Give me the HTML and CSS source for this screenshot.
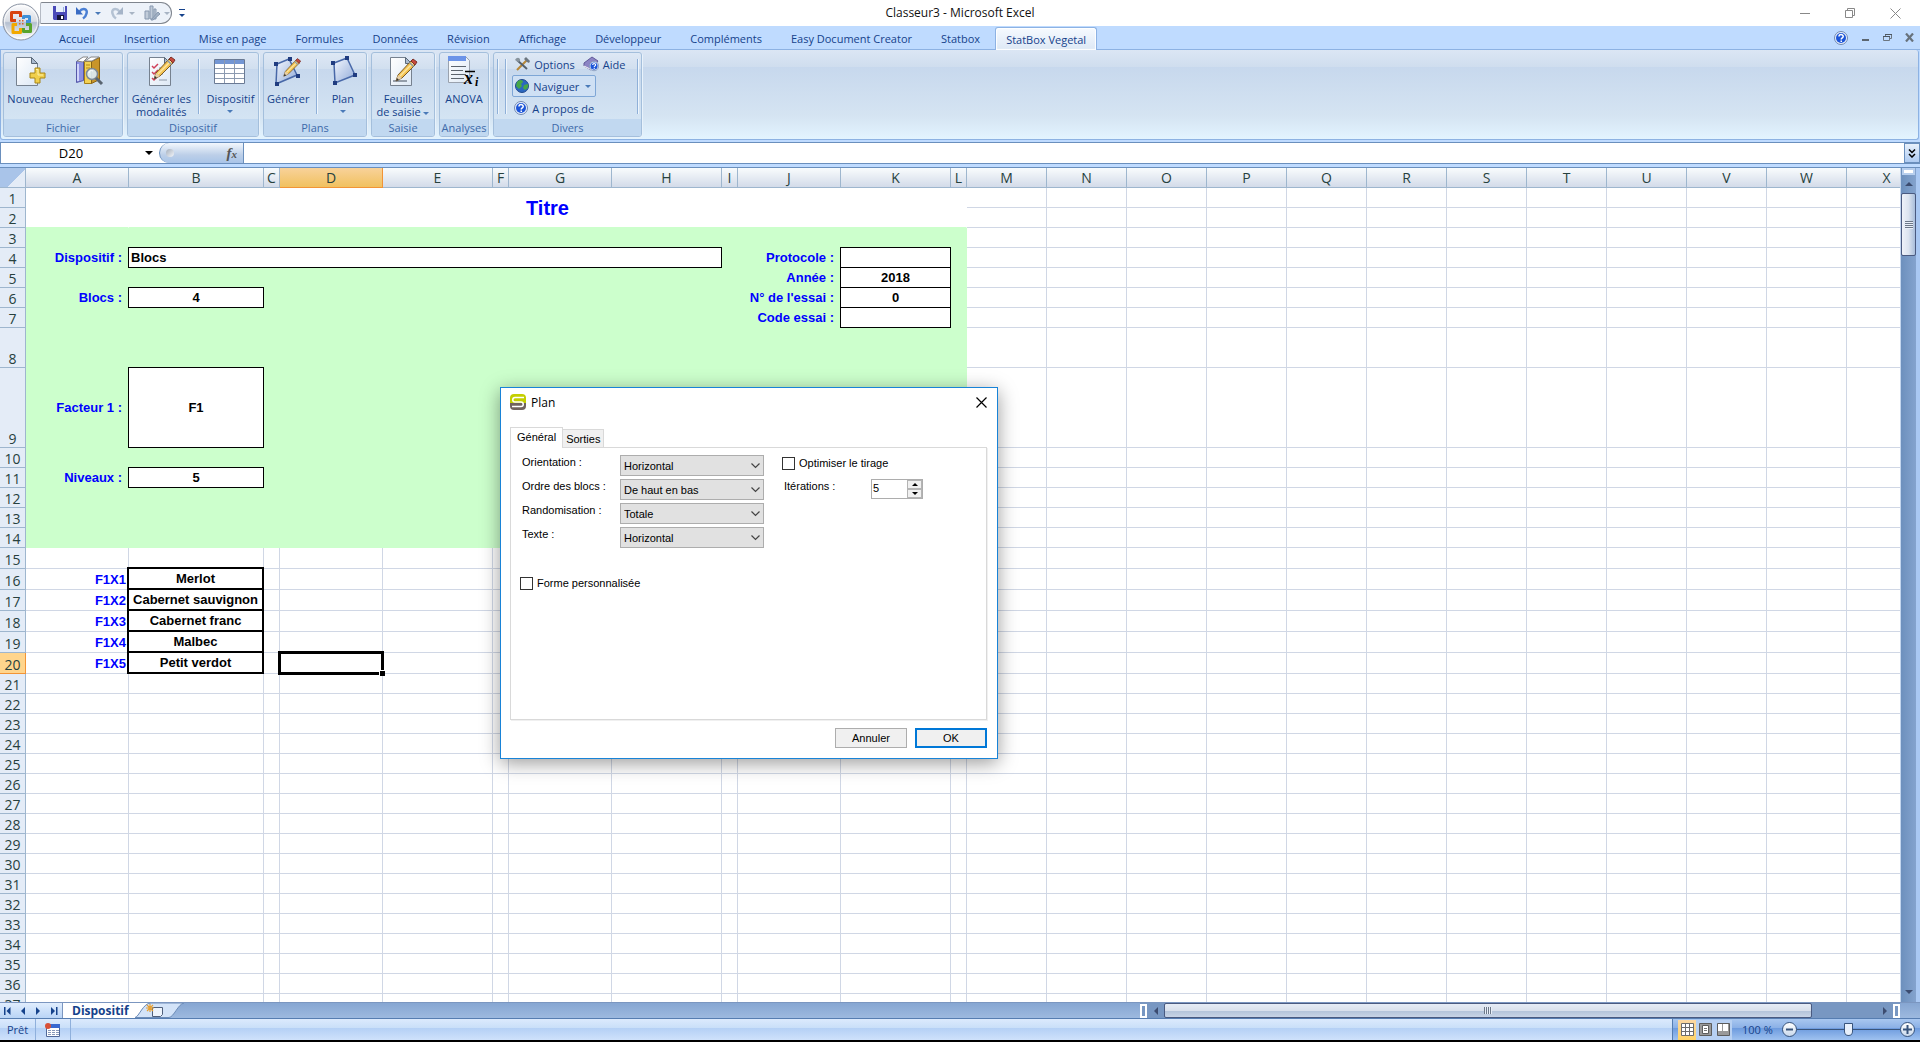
FILE: index.html
```html
<!DOCTYPE html>
<html lang="fr">
<head>
    <meta charset="UTF-8">
    <meta name="viewport" content="width=device-width, initial-scale=1.0">
    <title>Classeur3 - Microsoft Excel</title>
    <link rel="stylesheet" href="styles.css">
</head>
<body>

    <!-- Title bar -->
    <header class="titlebar">
        <button class="office-button" aria-label="Bouton Office">
            <svg width="38" height="38" viewBox="0 0 38 38">
                <defs>
                    <linearGradient id="orb" x1="0" y1="0" x2="0" y2="1">
                        <stop offset="0" stop-color="#fdfdfe"/><stop offset=".48" stop-color="#d9dde4"/>
                        <stop offset=".52" stop-color="#b4bfd0"/><stop offset="1" stop-color="#ffffff"/>
                    </linearGradient>
                </defs>
                <circle cx="19" cy="19" r="18" fill="url(#orb)" stroke="#8a93a3"/>
                <circle cx="19" cy="19" r="16.500" fill="none" stroke="#fff" stroke-opacity=".7"/>
                <g fill="none" stroke-width="3" stroke-linejoin="round">
                    <path d="M14 17.500H9.500V9.500H18.500V14" stroke="#d8430e"/>
                    <path d="M21.500 16V13.500H27.500V18.500H24" stroke="#3d8fd8"/>
                    <path d="M15 21.500H11V29.500H18.500V25" stroke="#f2a900"/>
                    <path d="M24 21.500H28.500V28.500H21.500V25" stroke="#58a42c"/>
                </g>
                <path d="M17 17h1.500v1.500H17zM20 17h1.500v1.500H20zM17 20h1.500v1.500H17zM20 20h1.500v1.500H20z" fill="#d8602a"/>
            </svg>
        </button>
        <div class="quick-access">
            <button aria-label="Enregistrer">
                <svg width="14" height="14" viewBox="0 0 14 14"><path d="M0 0h14v14H1L0 13z" fill="#4a4ab8"/><path d="M3 0h9v6H3z" fill="#e8f0fc"/><path d="M10 1h1v5h-1z" fill="#9db4e0"/><path d="M4 9h7v5H4z" fill="#16163c"/><path d="M8 10h2v3H8z" fill="#fff"/></svg>
            </button>
            <button aria-label="Annuler la frappe">
                <svg width="13" height="14" viewBox="0 0 13 14"><path d="M3 6C7 1 12 3 10.500 7.500C10 10 8.500 11.500 7 12.500" fill="none" stroke="#4a7fd4" stroke-width="2.500"/><path d="M0 1v7.500h7z" fill="#3a6cc4"/></svg>
                <i class="caret"></i>
            </button>
            <button aria-label="Rétablir">
                <svg width="13" height="14" viewBox="0 0 13 14"><path d="M10 6C6 1 1 3 2.500 7.500C3 10 4.500 11.500 6 12.500" fill="none" stroke="#b4c2d3" stroke-width="2.500"/><path d="M13 1v7.500H6z" fill="#a5b4c8"/></svg>
                <i class="caret caret-off"></i>
            </button>
            <button aria-label="Graphique">
                <svg width="17" height="16" viewBox="0 0 17 16"><path d="M1 6h4v8H1zM6 1h3v13H6zM10 4h2v10h-2z" fill="#c0cbd9" stroke="#8798af"/><path d="M7 15l7-8 2 2-7 6z" fill="#a3b2c5" stroke="#8798af"/></svg>
                <i class="caret caret-off"></i>
            </button>
        </div>
        <button class="customize" aria-label="Personnaliser"><i class="caret"></i></button>
        <h1 class="title">Classeur3 - Microsoft Excel</h1>
        <div class="window-buttons">
            <button aria-label="Réduire"><svg width="11" height="11" viewBox="0 0 11 11"><path d="M0 5.500h10"/></svg></button>
            <button aria-label="Restaurer"><svg width="11" height="11" viewBox="0 0 11 11"><path d="M.5 2.500h7v7h-7zM2.500 2.500v-2h7v7h-2"/></svg></button>
            <button aria-label="Fermer"><svg width="11" height="11" viewBox="0 0 11 11"><path d="M.5.500l10 10M10.500.500l-10 10"/></svg></button>
        </div>
    </header>

    <!-- Ribbon tabs -->
    <nav class="tabs">
        <a href="#">Accueil</a>
        <a href="#">Insertion</a>
        <a href="#">Mise en page</a>
        <a href="#">Formules</a>
        <a href="#">Données</a>
        <a href="#">Révision</a>
        <a href="#">Affichage</a>
        <a href="#">Développeur</a>
        <a href="#">Compléments</a>
        <a href="#">Easy Document Creator</a>
        <a href="#">Statbox</a>
        <a href="#" class="active">StatBox Vegetal</a>
        <div class="tabs-right">
            <button aria-label="Aide"><svg width="14" height="14" viewBox="0 0 14 14"><use href="#help"/></svg></button>
            <button aria-label="Réduire le classeur"><svg width="9" height="9" viewBox="0 0 9 9"><path d="M1 6h7v2H1z" fill="#5c6670"/></svg></button>
            <button aria-label="Restaurer le classeur"><svg width="9" height="9" viewBox="0 0 9 9"><path d="M.5 3.500h6v4h-6zM2.500 3V1.500h6v4H7" fill="none" stroke="#6c7680"/><path d="M2 1h7v1H2zM0 3h7v1H0z" fill="#4c5660"/></svg></button>
            <button aria-label="Fermer le classeur"><svg width="9" height="9" viewBox="0 0 9 9"><path d="M1 .5l7 8M8 .5l-7 8" stroke="#68727c" stroke-width="2.200"/></svg></button>
        </div>
    </nav>

    <!-- Shared shapes -->
    <svg class="shapes" width="0" height="0">
        <defs>
            <linearGradient id="sheetfill" x1="0" y1="0" x2="1" y2="1"><stop offset="0" stop-color="#fff"/><stop offset="1" stop-color="#dde8f5"/></linearGradient>
            <linearGradient id="poly" x1="0" y1="0" x2="1" y2="1"><stop offset="0" stop-color="#f4f8fe"/><stop offset="1" stop-color="#8fa9d8"/></linearGradient>
            <g id="help">
                <circle cx="7" cy="7" r="6.500" fill="#e8f0fc" stroke="#7188b0"/>
                <circle cx="7" cy="7" r="5" fill="#1c55d8"/>
                <path d="M5 5.500C5 3 9.200 3 9.200 5.400C9.200 6.800 7.200 6.800 7.200 8.500" fill="none" stroke="#fff" stroke-width="1.500"/>
                <path d="M6.500 9.500h1.500v1.500H6.500z" fill="#fff"/>
            </g>
            <g id="page">
                <path d="M.5.500h15l6 6v22H.5z" fill="url(#sheetfill)" stroke="#76818f"/>
                <path d="M15.500.500l6 6h-6z" fill="#a9bad0" stroke="#5a6878"/>
            </g>
            <g id="pencil">
                <path d="M0 22l2-6L15 2l4 4L6 19z" fill="#f4c452" stroke="#7a5a28"/>
                <path d="M4 17L17 4" stroke="#fbe6a4" stroke-width="1.500"/>
                <path d="M15 2l2-2 4 3-2 3z" fill="#c84a3c" stroke="#7c3028"/>
                <path d="M13.500 3.500l4 4" stroke="#8898a8" stroke-width="1.500"/>
                <path d="M0 22l2-6 4 3z" fill="#e8d0a8"/><path d="M0 22l1-3 2 2z" fill="#333"/>
            </g>
        </defs>
    </svg>

    <!-- Ribbon -->
    <section class="ribbon">
        <div class="group group-fichier">
            <div class="group-body">
                <button class="big">
                    <svg width="32" height="32" viewBox="0 0 32 32"><use href="#page" x="2" y="1"/><path d="M21 12h5v5h5v5h-5v5h-5v-5h-5v-5h5z" fill="#f0cf4c" stroke="#a88618"/><path d="M22 13.500h2V19h5" fill="none" stroke="#fdf0a8"/></svg>
                    <span>Nouveau</span>
                </button>
                <button class="big">
                    <svg width="32" height="32" viewBox="0 0 32 32">
                        <path d="M3.500 5.500l7-4v23l-7 2z" fill="#8c90e0" stroke="#5558a8"/><path d="M5 8v17" stroke="#d0d4fa" stroke-width="2"/>
                        <path d="M4 5l6-4h5l-5 5z" fill="#fff" stroke="#888"/>
                        <path d="M11.500 5.500h7v22h-7z" fill="#f3d154" stroke="#a47e18"/><path d="M18.500 5.500l8-4v22l-8 4z" fill="#c8952a" stroke="#8a6414"/>
                        <path d="M12 5l6-4h8l-7 4z" fill="#fff" stroke="#888"/><path d="M13 9h4M13 12h4" stroke="#b48818"/>
                        <circle cx="19" cy="18" r="5.500" fill="#dcecf8" fill-opacity=".9" stroke="#7c8894" stroke-width="1.500"/>
                        <path d="M23 22l6 6" stroke="#596470" stroke-width="3"/><path d="M16 17c0-2 2-3 4-2" fill="none" stroke="#fff"/>
                    </svg>
                    <span>Rechercher</span>
                </button>
            </div>
            <div class="group-label">Fichier</div>
        </div>
        <div class="group group-dispositif">
            <div class="group-body">
                <button class="big">
                    <svg width="32" height="32" viewBox="0 0 32 32"><use href="#page" x="4" y="1"/><path d="M7 10l2 2 4-4M7 16l2 2 4-4M7 22l2 2 4-4" fill="none" stroke="#d04058" stroke-width="1.500"/><path d="M14 12h7M14 18h4M14 24h8" stroke="#8c98a8"/><use href="#pencil" x="9" y="1"/></svg>
                    <span>Générer les<br>modalités</span>
                </button>
                <i class="sep"></i>
                <button class="big">
                    <svg width="32" height="32" viewBox="0 0 32 32"><path d="M.5 3.500h30v24H.5z" fill="#fff" stroke="#6a7a94"/><path d="M1 4h29v4H1z" fill="#7396d4"/><path d="M1 12.500h29M1 17.500h29M1 22.500h29M10.500 4v23M20.500 4v23" stroke="#8c9ab0"/></svg>
                    <span>Dispositif</span>
                    <i class="caret"></i>
                </button>
            </div>
            <div class="group-label">Dispositif</div>
        </div>
        <div class="group group-plans">
            <div class="group-body">
                <button class="big">
                    <svg width="32" height="32" viewBox="0 0 32 32"><path d="M5 8l12-5 8 16-21 9z" fill="url(#poly)" stroke="#4868a8" stroke-width="1.500"/><path d="M2 6h4v4H2zM16 1h4v4h-4zM24 18h4v4h-4zM3 26h4v4H3z" fill="#203c80"/><use href="#pencil" x="11" y="2" transform="translate(3 1) scale(.8)"/></svg>
                    <span>Générer</span>
                </button>
                <i class="sep"></i>
                <button class="big">
                    <svg width="32" height="32" viewBox="0 0 32 32"><path d="M7 7l13-5 8 17-20 8z" fill="url(#poly)" stroke="#4868a8" stroke-width="1.500"/><path d="M4 5h4v4H4zM18 0h4v4h-4zM26 17h4v4h-4zM6 25h4v4H6z" fill="#203c80"/></svg>
                    <span>Plan</span>
                    <i class="caret"></i>
                </button>
            </div>
            <div class="group-label">Plans</div>
        </div>
        <div class="group group-saisie">
            <div class="group-body">
                <button class="big">
                    <svg width="32" height="32" viewBox="0 0 32 32"><use href="#page" x="3" y="1"/><path d="M6 25h14" stroke="#404c5c"/><use href="#pencil" x="9" y="3"/></svg>
                    <span>Feuilles<br>de saisie <i class="caret"></i></span>
                </button>
            </div>
            <div class="group-label">Saisie</div>
        </div>
        <div class="group group-analyses">
            <div class="group-body">
                <button class="big">
                    <svg width="32" height="32" viewBox="0 0 32 32"><path d="M.5.500h17l4 4v22H.5z" fill="url(#sheetfill)" stroke="#9aa2ae"/><path d="M0 0h18v5H0z" fill="#6c94e8"/><path d="M3 10.500h15M3 14.500h12M3 18.500h15M3 22.500h13" stroke="#5c646e"/><path d="M17 15.500h10" stroke="#000" stroke-width="1.500"/><text x="16" y="28" class="xbar">x</text><text x="27" y="30" class="xbar-sub">i</text></svg>
                    <span>ANOVA</span>
                </button>
            </div>
            <div class="group-label">Analyses</div>
        </div>
        <div class="group group-divers">
            <div class="group-body">
                <i class="sep"></i>
                <i class="sep"></i>
                <div class="small-list">
                    <div class="small-row">
                        <button class="small"><svg width="16" height="16" viewBox="0 0 16 16"><path d="M3 14L13 4" stroke="#b88838" stroke-width="2.200"/><path d="M10 3l2-2 4 4-1 2-2-1-2-2z" fill="#6c7680"/><path d="M3 4l10 9" stroke="#54606c" stroke-width="2"/><path d="M1 4c2-4 6-2 5 1L4 6z" fill="#88949e"/></svg>Options</button>
                        <button class="small"><svg width="16" height="16" viewBox="0 0 16 16"><path d="M1 7l8-6 6 4-7 9-7-4z" fill="#8c84c4" stroke="#605898"/><path d="M1 10l7 3.500" stroke="#fff"/><g transform="translate(6 5) scale(.72)"><use href="#help"/></g></svg>Aide</button>
                    </div>
                    <button class="small framed"><svg width="14" height="14" viewBox="0 0 14 14"><circle cx="7" cy="7" r="6.500" fill="#2c68c0" stroke="#20488c"/><path d="M2 3c3-3 6-2 6 0L6 5l1 2-3 3-3-3zM9 6l4-1c1 3-1 5-3 6L8 9z" fill="#48a848"/></svg>Naviguer<i class="caret"></i></button>
                    <button class="small"><svg width="14" height="14" viewBox="0 0 14 14"><use href="#help"/></svg>A propos de</button>
                </div>
                <i class="sep"></i>
            </div>
            <div class="group-label">Divers</div>
        </div>
    </section>

    <!-- Formula bar -->
    <div class="formula-bar">
        <input class="name-box" type="text" value="D20" aria-label="Zone Nom">
        <i class="name-caret"></i>
        <div class="fx"><i class="fx-dot"></i><button aria-label="Insérer une fonction">f<sub>x</sub></button></div>
        <input class="formula" type="text" aria-label="Barre de formule">
        <button class="expand" aria-label="Développer la barre de formule">
            <svg width="8" height="9" viewBox="0 0 8 9"><path d="M1 .5l3 3 3-3M1 5l3 3 3-3" fill="none" stroke="#000" stroke-width="1.500"/></svg>
        </button>
    </div>

    <!-- Worksheet -->
    <main class="workspace">
        <div class="sheet-area">
            <table class="sheet" id="sheet"></table>
        </div>
        <div class="vscroll">
            <i class="vsplit"></i>
            <button class="vup" aria-label="Défiler vers le haut"></button>
            <i class="vthumb"></i>
            <button class="vdown" aria-label="Défiler vers le bas"></button>
        </div>

        <!-- Plan dialog -->
        <form class="dialog" role="dialog" aria-labelledby="dialog-title">
            <div class="dialog-title">
                <svg width="16" height="16" viewBox="0 0 16 16"><path d="M0 9V4a4 4 0 0 1 4-4h8a4 4 0 0 1 4 4v5z" fill="#c4cf00"/><path d="M0 9h16v3a4 4 0 0 1-4 4H4a4 4 0 0 1-4-4z" fill="#70625e"/><path d="M14 3.500H5C2 3.500 2 8 5 8h6c3 0 3 4.500 0 4.500H2" fill="none" stroke="#fff" stroke-width="1.500"/></svg>
                <h2 id="dialog-title">Plan</h2>
                <button type="button" class="dialog-close" aria-label="Fermer"><svg width="11" height="11" viewBox="0 0 11 11"><path d="M.5.500l10 10M10.500.500l-10 10" stroke="#000" stroke-width="1.200"/></svg></button>
            </div>
            <div class="dialog-tabs">
                <button type="button" class="selected">Général</button>
                <button type="button">Sorties</button>
            </div>
            <div class="panel">
                <div class="fields">
                    <label for="orientation">Orientation :</label>
                    <div class="combo"><select id="orientation"><option>Horizontal</option><option>Vertical</option></select><svg width="9" height="6" viewBox="0 0 9 6"><path d="M.5.500l4 4 4-4"/></svg></div>
                    <label for="ordre">Ordre des blocs :</label>
                    <div class="combo"><select id="ordre"><option>De haut en bas</option></select><svg width="9" height="6" viewBox="0 0 9 6"><path d="M.5.500l4 4 4-4"/></svg></div>
                    <label for="random">Randomisation :</label>
                    <div class="combo"><select id="random"><option>Totale</option></select><svg width="9" height="6" viewBox="0 0 9 6"><path d="M.5.500l4 4 4-4"/></svg></div>
                    <label for="texte">Texte :</label>
                    <div class="combo"><select id="texte"><option>Horizontal</option><option>Vertical</option></select><svg width="9" height="6" viewBox="0 0 9 6"><path d="M.5.500l4 4 4-4"/></svg></div>
                </div>
                <div class="options">
                    <label class="check"><input type="checkbox">Optimiser le tirage</label>
                    <div class="iterations">
                        <label for="iterations">Itérations :</label>
                        <div class="spinner">
                            <input id="iterations" type="number" value="5">
                            <div class="spin-buttons">
                                <button type="button" aria-label="Plus"><i class="up"></i></button>
                                <button type="button" aria-label="Moins"><i class="down"></i></button>
                            </div>
                        </div>
                    </div>
                </div>
                <label class="check check-form"><input type="checkbox">Forme personnalisée</label>
            </div>
            <div class="dialog-actions">
                <button type="button">Annuler</button>
                <button type="button" class="default">OK</button>
            </div>
        </form>
    </main>

    <!-- Sheet tabs and horizontal scroll -->
    <div class="sheet-tabs">
        <div class="tab-nav">
            <button aria-label="Première feuille"><svg width="7" height="8" viewBox="0 0 7 8"><path d="M0 0h1.500v8H0zM6.500 0v8l-4-4z"/></svg></button>
            <button aria-label="Feuille précédente"><svg width="7" height="8" viewBox="0 0 7 8"><path d="M5 0v8L1 4z"/></svg></button>
            <button aria-label="Feuille suivante"><svg width="7" height="8" viewBox="0 0 7 8"><path d="M1 0v8l4-4z"/></svg></button>
            <button aria-label="Dernière feuille"><svg width="7" height="8" viewBox="0 0 7 8"><path d="M5 0h1.500v8H5zM0 0v8l4-4z"/></svg></button>
        </div>
        <a href="#" class="sheet-tab">Dispositif</a>
        <button class="new-sheet" aria-label="Insérer une feuille">
            <svg width="50" height="15" viewBox="0 0 50 15"><path d="M0 0h16C8 0 4 14 0 14.500z" fill="#fff"/><path d="M0 14.500C4 14 8 0 16 0h33c-6 1-10 14-15 14.500z" fill="#d3e3f8" stroke="#6c8cb8"/><path d="M17.500 4.500h10v7l-2 2h-8z" fill="#eef4fc" stroke="#50607c"/><path d="M15 1v8M11 5h8M12 2l6 6M18 2l-6 6" stroke="#e8a030" stroke-width="1.200"/></svg>
        </button>
        <div class="hscroll">
            <i class="hsplit"></i>
            <button aria-label="Défiler vers la gauche"><i class="arrow-left"></i></button>
            <div class="htrack"><i class="hthumb"></i></div>
            <button aria-label="Défiler vers la droite"><i class="arrow-right"></i></button>
            <i class="hsplit"></i>
        </div>
    </div>

    <!-- Status bar -->
    <footer class="status">
        <span class="ready">Prêt</span>
        <button class="macro" aria-label="Enregistrer une macro">
            <svg width="16" height="14" viewBox="0 0 16 14"><path d="M1.500 2.500h13v11h-13z" fill="#fff" stroke="#506898"/><path d="M2 1h13v4H2z" fill="#3868d0"/><path d="M3 7.500h11M3 9.500h11M3 11.500h11" stroke="#8898b8" stroke-dasharray="3 1"/><circle cx="3" cy="3" r="3" fill="#d85038"/></svg>
        </button>
        <div class="zoom">
            <div class="views">
                <button class="on" aria-label="Normal"><svg width="13" height="13" viewBox="0 0 13 13"><path d="M.5.500h12v12H.5zM4.500 0v13M8.500 0v13M0 4.500h13M0 8.500h13" fill="#fff" stroke="#6c6c6c"/></svg></button>
                <button aria-label="Mise en page"><svg width="13" height="13" viewBox="0 0 13 13"><path d="M.5.500h12v12H.5z" fill="#999" stroke="#5c5c5c"/><path d="M3.500 2.500h6v8h-6z" fill="#fff" stroke="#5c5c5c"/><path d="M5 5.500h3M5 7.500h3" stroke="#777"/></svg></button>
                <button aria-label="Sauts de page"><svg width="13" height="13" viewBox="0 0 13 13"><path d="M.5.500h12v12H.5z" fill="#999" stroke="#5c5c5c"/><path d="M1 1h4v7H1zM6 1h5v7H6z" fill="#fff"/></svg></button>
            </div>
            <span>100 %</span>
            <button class="round" aria-label="Zoom arrière"><svg width="9" height="9" viewBox="0 0 9 9"><path d="M1 4.500h7"/></svg></button>
            <div class="zoom-track"><input type="range" min="0" max="100" value="50" aria-label="Zoom"></div>
            <button class="round" aria-label="Zoom avant"><svg width="9" height="9" viewBox="0 0 9 9"><path d="M0 4.500h9M4.500 0v9"/></svg></button>
        </div>
    </footer>

    <script src="sheet.js"></script>
</body>
</html>
```

FILE: styles.css
```css
/* General Reset */
* {
    margin: 0;
    padding: 0;
    box-sizing: border-box;
}

body {
    font-family: "Open Sans", "Noto Sans", sans-serif;
    font-size: 11px;
    display: flex;
    flex-direction: column;
    height: 100vh;
    overflow: hidden;
    background-color: #bfdbff;
    color: #15428b;
}

button {
    font: inherit;
    color: inherit;
    background: none;
    border: none;
}

a {
    color: inherit;
    text-decoration: none;
}

svg {
    display: block;
    flex: none;
}

.shapes {
    position: absolute;
}

.caret {
    display: inline-block;
    border: 3px solid transparent;
    border-top-color: #4a7ab8;
    border-bottom: none;
}

.caret-off {
    border-top-color: #a8b4c4;
}

/* Title bar */
.titlebar {
    position: relative;
    display: flex;
    align-items: center;
    height: 26px;
    padding-left: 40px;
    background-color: #fff;
    flex: none;
}

.office-button {
    position: absolute;
    left: 2px;
    top: 3px;
    z-index: 2;
}

.quick-access {
    display: flex;
    align-items: center;
    gap: 9px;
    width: 132px;
    height: 22px;
    padding-left: 12px;
    background-color: #edf2f9;
    border: 1px solid #7f858e;
    border-left-color: #b4bac4;
    border-radius: 2px 11px 11px 0;
}

.quick-access button {
    display: flex;
    align-items: center;
    gap: 6px;
}

.quick-access button:last-child {
    gap: 3px;
}

.customize {
    display: flex;
    margin-left: 7px;
    padding-top: 4px;
    border-top: 1px solid #15428b;
}

.customize .caret {
    border-top-color: #15428b;
}

.title {
    position: absolute;
    left: 0;
    right: 0;
    line-height: 26px;
    font-size: 12px;
    font-weight: normal;
    text-align: center;
    color: #111;
    pointer-events: none;
}

.window-buttons {
    display: flex;
    gap: 34px;
    margin-left: auto;
    padding-right: 19px;
}

.window-buttons path {
    fill: none;
    stroke: #888;
}

/* Ribbon tabs */
.tabs {
    display: flex;
    gap: 1px;
    height: 24px;
    padding-left: 45px;
    border-bottom: 1px solid #8db2e3;
    flex: none;
}

.tabs a {
    padding: 0 14px;
    line-height: 26px;
    white-space: nowrap;
}

.tabs .active {
    height: 23px;
    margin-top: 1px;
    padding: 0 10px;
    line-height: 24px;
    margin-bottom: -1px;
    background-image: linear-gradient(#f6faff, #dde8f5);
    border: 1px solid #8db2e3;
    border-bottom: none;
    border-radius: 3px 3px 0 0;
    box-shadow: inset 0 0 1px 1px #fff;
}

.tabs-right {
    display: flex;
    align-items: center;
    gap: 13px;
    margin-left: auto;
    padding-right: 6px;
}

/* Ribbon */
.ribbon {
    display: flex;
    gap: 4px;
    height: 90px;
    margin-right: 1px;
    padding: 2px;
    background-image: linear-gradient(#dbe6f4, #cfddee 17px, #c7d8ed 17px, #d5e4f2 66px, #e3f4ff);
    border: 1px solid #8db2e3;
    border-top: none;
    border-radius: 0 3px 3px 3px;
    flex: none;
}

.group {
    display: flex;
    flex-direction: column;
    height: 85px;
    background-image: linear-gradient(#dee8f5, #d1dfef 16px, #c7d8ed 16px, #d8e8f5);
    border: 1px solid #a4bfdc;
    border-radius: 3px;
    box-shadow: 1px 1px 0 #e8f2fb;
}

.group-fichier { width: 120px; }
.group-dispositif { width: 132px; }
.group-plans { width: 104px; }
.group-saisie { width: 64px; }
.group-analyses { width: 50px; }
.group-divers { width: 149px; }

.group-body {
    display: flex;
    justify-content: space-around;
    flex: 1;
}

.group-label {
    height: 17px;
    line-height: 18px;
    text-align: center;
    color: #3e6aaa;
    background-color: #c1d8f0;
    border-radius: 0 0 2px 2px;
}

.big {
    display: flex;
    flex-direction: column;
    align-items: center;
    min-width: 40px;
    padding-top: 3px;
    line-height: 13px;
    white-space: nowrap;
}

.big span {
    margin-top: 4px;
}

.big > .caret {
    margin-top: 5px;
}

.big span .caret {
    vertical-align: middle;
}

.sep {
    width: 1px;
    height: 55px;
    margin-top: 6px;
    background-color: #8fb0d8;
    box-shadow: 1px 0 0 #eef5fc;
}

.xbar {
    font: italic bold 18px "Liberation Serif", serif;
}

.xbar-sub {
    font: italic bold 12px "Liberation Serif", serif;
}

.small-list {
    display: flex;
    flex-direction: column;
    align-items: flex-start;
    width: 118px;
}

.small-row {
    display: flex;
    gap: 4px;
}

.small {
    display: flex;
    align-items: center;
    gap: 4px;
    height: 22px;
    padding: 0 2px;
    white-space: nowrap;
}

.framed {
    border: 1px solid #7ea6d6;
    border-radius: 2px;
    background-color: #cfe0f4;
}

.framed .caret {
    margin: 0 2px;
}

/* Formula bar */
.formula-bar {
    display: flex;
    align-items: center;
    height: 22px;
    margin-top: 2px;
    background-color: #fff;
    border: 1px solid #6a8fbd;
    border-right: none;
    flex: none;
}

.name-box {
    width: 140px;
    border: none;
    font: 13px "Open Sans", sans-serif;
    text-align: center;
}

.name-caret {
    width: 8px;
    margin-left: 4px;
    border: 4px solid transparent;
    border-top-color: #000;
    border-bottom: none;
}

.fx {
    display: flex;
    justify-content: space-between;
    align-items: center;
    width: 85px;
    height: 20px;
    margin-left: 6px;
    padding: 0 6px;
    background-image: linear-gradient(#f2f7fd, #bccfe8 60%, #a9c4e8);
    border-left: 1px solid #6a8fbd;
    border-right: 1px solid #6a8fbd;
    border-radius: 10px 0 0 10px;
}

.fx-dot {
    width: 8px;
    height: 8px;
    border-radius: 4px;
    background-image: linear-gradient(135deg, #a4aebc, #f4f6fa);
}

.fx button {
    font: italic bold 15px "Liberation Serif", serif;
    line-height: 18px;
    color: #555;
}

.fx sub {
    font-size: 11px;
    vertical-align: baseline;
}

.formula {
    flex: 1;
    height: 20px;
    border: none;
}

.expand {
    display: flex;
    justify-content: center;
    align-items: center;
    width: 16px;
    height: 20px;
    border: 1px solid #6a8fbd;
    background-image: linear-gradient(#e8f1fc, #aecbf2);
}

/* Worksheet */
.workspace {
    position: relative;
    display: flex;
    flex: 1;
    min-height: 0;
    margin-top: 3px;
    padding-right: 4px;
    border-top: 1px solid #6a8fbd;
    background-color: #a9c8f3;
}

.sheet-area {
    flex: 1;
    overflow: hidden;
    background-color: #fff;
    border-right: 1px solid #c4d6ee;
}

.sheet {
    width: 0;
    table-layout: fixed;
    border-collapse: separate;
    border-spacing: 0;
}

.sheet th {
    height: 20px;
    font-size: 14px;
    font-weight: normal;
    color: #27413e;
    line-height: 17px;
    border-right: 1px solid #9eb6ce;
    border-bottom: 1px solid #9eb6ce;
    overflow: hidden;
}

.sheet thead th {
    background-image: linear-gradient(#f9fcfd, #d3dbe9);
}

.sheet thead .current {
    background-image: linear-gradient(#f8d29a, #f1c15f);
    border-color: #f29436;
}

.sheet thead .corner {
    background-image: linear-gradient(135deg, #a9c4e9 60%, #e4ecf7 60%);
}

.sheet tbody th {
    vertical-align: bottom;
    background-color: #e4ecf7;
}

.sheet tbody .current {
    background-color: #ffd58d;
    border-color: #f29436;
}

.sheet td {
    font: bold 13px "Liberation Sans", Arial, sans-serif;
    color: #000;
    text-align: center;
    white-space: nowrap;
    border-right: 1px solid #d0d7e5;
    border-bottom: 1px solid #d0d7e5;
}

.sheet .title-cell {
    font-size: 20px;
    line-height: 24px;
    color: #0000ff;
    border-color: #fff;
    border-bottom-color: #ccffcc;
}

.sheet .green {
    background-color: #ccffcc;
    border-color: #ccffcc;
}

.sheet .label {
    color: #0000ff;
    text-align: right;
    padding-right: 6px;
}

.sheet .code {
    color: #0000ff;
    text-align: right;
    padding-right: 2px;
}

.sheet .box {
    background-color: #fff;
    border-color: #000;
    box-shadow: -1px -1px 0 #000, -1px 0 0 #000, 0 -1px 0 #000;
}

.sheet .align-left {
    text-align: left;
    padding-left: 2px;
}

.sheet .thick {
    border-width: 2px;
    border-color: #000;
    border-left: none;
    border-top: none;
    box-shadow: -2px -2px 0 #000, -2px 0 0 #000, 0 -2px 0 #000;
}

.sheet .selected-cell {
    position: relative;
}

.cursor {
    position: absolute;
    inset: -2px;
    border: 3px solid #000;
}

.cursor::after {
    content: "";
    position: absolute;
    right: -4px;
    bottom: -4px;
    width: 5px;
    height: 5px;
    background-color: #000;
    box-shadow: -1px -1px 0 #fff;
}

/* Vertical scroll bar */
.vscroll {
    display: flex;
    flex-direction: column;
    align-items: center;
    width: 15px;
    background-image: linear-gradient(90deg, #6d90bd, #84a3ce);
}

.vsplit {
    width: 13px;
    height: 7px;
    background-color: #fff;
    border: 2px solid #b8cfee;
}

.vup,
.vdown {
    border: 4px solid transparent;
}

.vup {
    margin: 3px 0 7px;
    border-bottom-color: #3c4c70;
}

.vdown {
    margin: auto 0 4px;
    border-top-color: #3c4c70;
}

.vthumb {
    width: 15px;
    height: 63px;
    border: 1px solid #4a5a80;
    border-radius: 2px;
    background-image: repeating-linear-gradient(#6c7888 0 1px, #e8eef8 1px 2px), linear-gradient(90deg, #eef2f9, #dbe3ef 50%, #a9bedb);
    background-size: 8px 8px, 100% 100%;
    background-position: center;
    background-repeat: no-repeat;
}

/* Plan dialog */
.dialog {
    position: absolute;
    left: 500px;
    top: 219px;
    width: 498px;
    padding: 0 10px 10px 9px;
    background-color: #fff;
    border: 1px solid #1883d7;
    box-shadow: 0 4px 18px rgba(0, 0, 0, 0.4);
    font: 11px "Liberation Sans", Arial, sans-serif;
    color: #000;
    z-index: 3;
}

.dialog-title {
    display: flex;
    align-items: center;
    height: 28px;
}

.dialog-title h2 {
    margin-left: 5px;
    font: 12px "Open Sans", sans-serif;
}

.dialog-close {
    margin-left: auto;
}

.dialog-tabs {
    display: flex;
    align-items: flex-end;
    height: 31px;
}

.dialog-tabs button {
    height: 18px;
    padding: 0 3px;
    background-color: #f0f0f0;
    border: 1px solid #d9d9d9;
    border-left: none;
    border-bottom: none;
}

.dialog-tabs .selected {
    height: 21px;
    padding: 0 6px 2px;
    margin-bottom: -1px;
    background-color: #fff;
    border-left: 1px solid #d9d9d9;
}

.panel {
    display: grid;
    grid-template-columns: 244px 1fr;
    grid-template-rows: 96px 1fr;
    column-gap: 18px;
    height: 273px;
    padding: 7px 9px;
    border: 1px solid #d9d9d9;
    box-shadow: 1px 1px 0 #f0f0f0;
}

.fields {
    display: grid;
    grid-template-columns: 100px 144px;
    grid-auto-rows: 24px;
}

.fields label {
    line-height: 14px;
    padding-left: 2px;
}

.combo {
    position: relative;
}

.combo select {
    appearance: none;
    width: 100%;
    height: 21px;
    padding-left: 3px;
    font: inherit;
    color: #000;
    background-color: #e1e1e1;
    border: 1px solid #adadad;
    border-radius: 0;
}

.combo svg {
    position: absolute;
    right: 4px;
    top: 8px;
    pointer-events: none;
}

.combo path {
    fill: none;
    stroke: #444;
    stroke-width: 1.2;
}

.check {
    display: flex;
    align-items: center;
    gap: 4px;
    height: 16px;
}

.check input {
    appearance: none;
    width: 13px;
    height: 13px;
    border: 1px solid #333;
    background-color: #fff;
}

.check-form {
    margin-top: 24px;
}

.iterations {
    display: flex;
    justify-content: space-between;
    width: 141px;
    margin-top: 8px;
    padding-left: 2px;
    line-height: 14px;
}

.spinner {
    display: flex;
    width: 52px;
    height: 20px;
    border: 1px solid #adadad;
}

.spinner input {
    appearance: textfield;
    width: 35px;
    height: 16px;
    padding-left: 1px;
    border: none;
    font: inherit;
    outline: none;
}

.spinner input::-webkit-inner-spin-button {
    appearance: none;
}

.spin-buttons {
    display: flex;
    flex-direction: column;
    width: 15px;
}

.spin-buttons button {
    display: flex;
    justify-content: center;
    align-items: center;
    flex: 1;
    background-color: #f0f0f0;
    border: 1px solid #b4b4b4;
}

.up,
.down {
    border: 3px solid transparent;
}

.up {
    border-top: none;
    border-bottom-color: #000;
}

.down {
    border-bottom: none;
    border-top-color: #000;
}

.dialog-actions {
    display: flex;
    justify-content: flex-end;
    gap: 8px;
    margin-top: 8px;
}

.dialog-actions button {
    width: 72px;
    height: 20px;
    background-color: #f0f0f0;
    border: 1px solid #adadad;
}

.dialog-actions .default {
    border: 2px solid #0078d7;
}

/* Sheet tabs */
.sheet-tabs {
    display: flex;
    height: 16px;
    padding-right: 20px;
    background-image: linear-gradient(#86a6d2, #9db9df);
    border-top: 1px solid #7b96c0;
    flex: none;
}

.tab-nav {
    display: flex;
    justify-content: space-around;
    align-items: center;
    width: 63px;
    background-image: linear-gradient(#e0edfd, #b9d4f6);
    border-right: 1px solid #7b96c0;
    fill: #15428b;
}

.sheet-tab {
    padding: 0 6px 0 9px;
    background-color: #fff;
    font-size: 12px;
    font-weight: bold;
    line-height: 15px;
}

.hscroll {
    display: flex;
    align-items: center;
    width: 40%;
    margin-left: auto;
    background-color: #7897c2;
}

.hscroll button {
    display: flex;
    justify-content: center;
    width: 17px;
}

.hsplit {
    width: 7px;
    height: 14px;
    background-color: #7897c2;
    border: 2px solid #fff;
}

.arrow-left,
.arrow-right {
    border: 4px solid transparent;
}

.arrow-left {
    border-left: none;
    border-right-color: #3c4c70;
}

.arrow-right {
    border-right: none;
    border-left-color: #3c4c70;
}

.htrack {
    flex: 1;
    height: 15px;
}

.hthumb {
    display: block;
    width: 91%;
    height: 15px;
    border: 1px solid #4a5a80;
    border-radius: 2px;
    background-image: repeating-linear-gradient(90deg, #6c7888 0 1px, #e8eef8 1px 2px), linear-gradient(#e6ecf5, #d9e0ec 50%, #b4c4da 55%, #c8d4e6);
    background-size: 8px 7px, 100% 100%;
    background-position: center;
    background-repeat: no-repeat;
}

/* Status bar */
.status {
    display: flex;
    align-items: center;
    height: 24px;
    background-image: linear-gradient(#dceafd, #c9dff9 9px, #b4d0f5 9px, #cfe2fb);
    border-top: 1px solid #567db1;
    border-bottom: 2px solid #000;
    flex: none;
}

.ready {
    width: 36px;
    padding-left: 7px;
    line-height: 21px;
    border-right: 1px solid #8fb0dc;
}

.macro {
    height: 21px;
    padding: 0 9px;
    border-right: 1px solid #8fb0dc;
}

.zoom {
    display: flex;
    align-items: center;
    width: 248px;
    height: 21px;
    margin-left: auto;
    padding: 0 5px;
    background-image: linear-gradient(#a9c7f0, #8ab0e6 9px, #6c9ade 9px, #9fc2f0);
    border-left: 1px solid #567db1;
}

.zoom span {
    width: 31px;
    white-space: nowrap;
}

.views {
    display: flex;
    margin-right: 10px;
    background-color: #b7d0f2;
}

.views button {
    display: flex;
    justify-content: center;
    align-items: center;
    width: 18px;
    height: 20px;
}

.views .on {
    background-image: linear-gradient(#fbd8a4, #ffd468);
}

.round {
    display: flex;
    justify-content: center;
    align-items: center;
    width: 15px;
    height: 15px;
    margin-left: 9px;
    border: 1px solid #38547c;
    border-radius: 8px;
    background-image: linear-gradient(#fff, #c8d8ec);
}

.round path {
    stroke: #38547c;
    stroke-width: 2;
}

.zoom-track {
    flex: 1;
}

.zoom-track + .round {
    margin-left: 0;
}

.zoom-track input {
    appearance: none;
    display: block;
    width: 100%;
    height: 14px;
    background: linear-gradient(#38547c, #38547c) center / 100% 1px no-repeat;
}

.zoom-track input::-webkit-slider-thumb {
    appearance: none;
    width: 9px;
    height: 13px;
    border: 1px solid #38547c;
    border-radius: 1px 1px 5px 5px;
    background-color: #e8f0fb;
}
```

FILE: sheet.js
```js
const columns = {
    A: 103, B: 135, C: 16, D: 103, E: 110, F: 16, G: 103, H: 110, I: 16, J: 103, K: 110, L: 16,
    M: 80, N: 80, O: 80, P: 80, Q: 80, R: 80, S: 80, T: 80, U: 80, V: 80, W: 80, X: 80
};

// rows that are not 20px high
const rowHeights = { 8: 40, 9: 80, 15: 21, 16: 21, 17: 21, 18: 21, 19: 21, 20: 21 };

const cells = {
    A1: { text: "", cls: "title-cell", rowspan: 2 },
    B1: { text: "Titre", cls: "title-cell", colspan: 11, rowspan: 2 },
    A4: { text: "Dispositif :", cls: "green label" },
    B4: { text: "Blocs", cls: "box align-left", colspan: 7 },
    A6: { text: "Blocs :", cls: "green label" },
    B6: { text: "4", cls: "box" },
    A9: { text: "Facteur 1 :", cls: "green label" },
    B9: { text: "F1", cls: "box" },
    A11: { text: "Niveaux :", cls: "green label" },
    B11: { text: "5", cls: "box" },
    J4: { text: "Protocole :", cls: "green label" },
    J5: { text: "Année :", cls: "green label" },
    J6: { text: "N° de l'essai :", cls: "green label" },
    J7: { text: "Code essai :", cls: "green label" },
    K4: { text: "", cls: "box" },
    K5: { text: "2018", cls: "box" },
    K6: { text: "0", cls: "box" },
    K7: { text: "", cls: "box" },
    D20: { text: "", cls: "selected-cell" }
};

["Merlot", "Cabernet sauvignon", "Cabernet franc", "Malbec", "Petit verdot"].forEach((name, i) => {
    cells["A" + (16 + i)] = { text: "F1X" + (i + 1), cls: "code" };
    cells["B" + (16 + i)] = { text: name, cls: "thick" };
});

const names = Object.keys(columns);
let html = `<colgroup><col style="width:26px">`;
names.forEach(c => html += `<col style="width:${columns[c]}px">`);
html += `</colgroup><thead><tr><th class="corner"></th>`;
names.forEach(c => html += `<th class="${c === "D" ? "current" : ""}">${c}</th>`);
html += `</tr></thead><tbody>`;

for (let row = 1; row <= 37; row++) {
    html += `<tr style="height:${rowHeights[row] || 20}px"><th class="${row === 20 ? "current" : ""}">${row}</th>`;
    for (let i = 0; i < names.length; i++) {
        const cell = cells[names[i] + row];
        if (row === 2 && i < 12) continue;
        if (cell) {
            const cursor = cell.cls === "selected-cell" ? `<i class="cursor"></i>` : "";
            html += `<td class="${cell.cls}" colspan="${cell.colspan || 1}" rowspan="${cell.rowspan || 1}">${cell.text}${cursor}</td>`;
            i += (cell.colspan || 1) - 1;
        } else {
            html += `<td class="${row >= 3 && row <= 14 && i < 12 ? "green" : ""}"></td>`;
        }
    }
    html += `</tr>`;
}

document.getElementById("sheet").innerHTML = html + `</tbody>`;
```
